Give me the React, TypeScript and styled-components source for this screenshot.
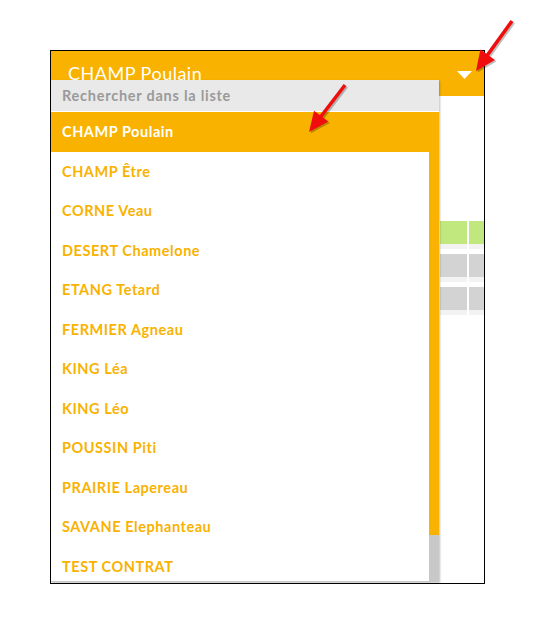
import React from 'react'
import styled, { createGlobalStyle } from 'styled-components'

const ORANGE = '#f9b200'

const GlobalStyle = createGlobalStyle`
  html, body {
    margin: 0;
    padding: 0;
    background: #fff;
    font-family: Lato, 'DejaVu Sans', sans-serif;
  }
`

const Page = styled.div`
  position: relative;
  width: 535px;
  height: 634px;
  padding: 50px 0 0 50px;
  box-sizing: border-box;
`

const Box = styled.div`
  position: relative;
  width: 435px;
  height: 534px;
  border: 1px solid #000;
  box-sizing: border-box;
  overflow: hidden;
`

const Header = styled.div`
  display: flex;
  align-items: center;
  justify-content: space-between;
  height: 45px;
  padding: 0 12px 0 17px;
  background: ${ORANGE};
  color: #fff;
`

const HeaderLabel = styled.span`
  font-size: 18px;
  letter-spacing: 0.5px;
  line-height: 1;
  margin-top: -1px;
`

const Caret = styled.svg`
  width: 15px;
  height: 8px;
  margin-top: 3px;
`

const Body = styled.div`
  display: flex;
  flex-direction: column;
  gap: 5px;
  padding: 125px 0 0 389px;
`

const TableRow = styled.div`
  display: flex;
  gap: 2px;
`

const Cell = styled.div<{ $fill: string }>`
  flex: 0 0 27px;
  height: 23px;
  background: ${p => p.$fill};
  border-bottom: 5px solid #f3f3f3;
`

const Panel = styled.div`
  position: absolute;
  left: 0;
  top: 29px;
  width: 388px;
  height: 502px;
  display: flex;
  flex-direction: column;
  gap: 1px;
  background: #fff;
  box-shadow: 1px 1px 2px rgba(0, 0, 0, 0.25);
`

const Search = styled.div`
  display: flex;
  align-items: center;
  height: 31px;
  padding: 0 11px;
  background: #e9e9e9;
  color: #9a9a9a;
  font-size: 14.5px;
  letter-spacing: 0.75px;
  font-weight: bold;
`

const ListArea = styled.div`
  display: flex;
  flex: 1;
  min-height: 0;
  border-bottom: 1px solid #c8c8c8;
`

const List = styled.ul`
  flex: 1;
  margin: 0;
  padding: 0;
  list-style: none;
  overflow: hidden;
`

const Item = styled.li<{ $active?: boolean }>`
  display: flex;
  align-items: center;
  height: 39.5px;
  padding: 0 11px;
  font-size: 14.5px;
  letter-spacing: 0.55px;
  font-weight: bold;
  color: ${p => (p.$active ? '#fff' : ORANGE)};
  background: ${p => (p.$active ? ORANGE : 'transparent')};
`

const ScrollTrack = styled.div`
  display: flex;
  flex-direction: column;
  width: 10px;
  background: #c8c8c8;
`

const ScrollThumb = styled.div<{ $size: number }>`
  height: ${p => p.$size}px;
  background: ${ORANGE};
`

const Annotations = styled.svg`
  position: absolute;
  left: 0;
  top: 0;
  width: 535px;
  height: 634px;
  pointer-events: none;
`

const names = [
  'CHAMP Poulain',
  'CHAMP Être',
  'CORNE Veau',
  'DESERT Chamelone',
  'ETANG Tetard',
  'FERMIER Agneau',
  'KING Léa',
  'KING Léo',
  'POUSSIN Piti',
  'PRAIRIE Lapereau',
  'SAVANE Elephanteau',
  'TEST CONTRAT'
]

const rows = ['#c1e87e', '#d3d3d3', '#d3d3d3']

const Arrow = ({ x1, y1, x2, y2 }: { x1: number; y1: number; x2: number; y2: number }) => {
  const dx = x2 - x1
  const dy = y2 - y1
  const len = Math.hypot(dx, dy)
  const ux = dx / len
  const uy = dy / len
  const bx = x2 - ux * 20
  const by = y2 - uy * 20
  const head = `${x2},${y2} ${bx - uy * 9},${by + ux * 9} ${bx + uy * 9},${by - ux * 9}`
  return (
    <g>
      <g transform='translate(1.5,1.5)' opacity={0.25}>
        <line x1={x1} y1={y1} x2={bx} y2={by} stroke='#000' strokeWidth={3.5} />
        <polygon points={head} fill='#000' />
      </g>
      <line x1={x1} y1={y1} x2={bx + ux * 2} y2={by + uy * 2} stroke='#f00d0d' strokeWidth={3.5} />
      <polygon points={head} fill='#f00d0d' />
    </g>
  )
}

export default function App () {
  return (
    <Page>
      <GlobalStyle />
      <Box>
        <Header>
          <HeaderLabel>CHAMP Poulain</HeaderLabel>
          <Caret viewBox='0 0 15 8'>
            <polygon points='0,0 15,0 7.5,8' fill='#fff' />
          </Caret>
        </Header>
        <Body>
          {rows.map((fill, i) => (
            <TableRow key={i}>
              <Cell $fill={fill} />
              <Cell $fill={fill} />
            </TableRow>
          ))}
        </Body>
        <Panel>
          <Search>Rechercher dans la liste</Search>
          <ListArea>
            <List>
              {names.map((n, i) => (
                <Item key={n} $active={i === 0}>{n}</Item>
              ))}
            </List>
            <ScrollTrack>
              <ScrollThumb $size={423} />
            </ScrollTrack>
          </ListArea>
        </Panel>
      </Box>
      <Annotations viewBox='0 0 535 634'>
        <Arrow x1={512} y1={21} x2={476} y2={71} />
        <Arrow x1={345} y1={85} x2={309} y2={132} />
      </Annotations>
    </Page>
  )
}
